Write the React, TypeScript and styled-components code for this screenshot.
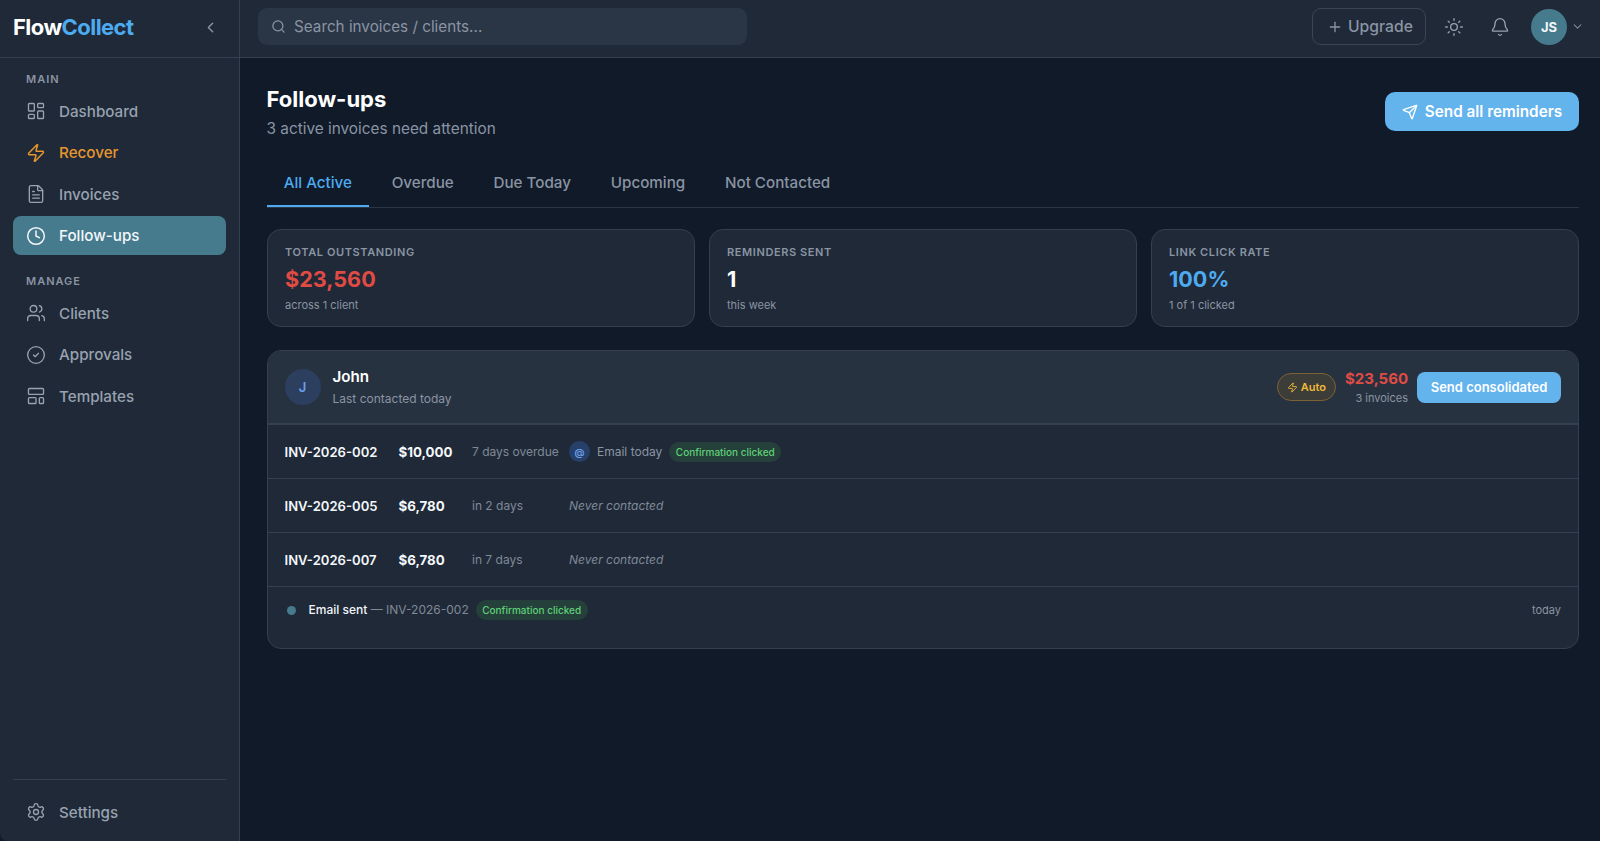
import React from "react";
import styled, { createGlobalStyle } from "styled-components";
import {
    Bell,
    ChevronDown,
    ChevronLeft,
    CircleCheck,
    Clock,
    FileText,
    LayoutDashboard,
    LayoutTemplate,
    Plus,
    Search,
    Send,
    Settings,
    Sun,
    Users,
    Zap,
} from "lucide-react";

const GlobalStyle = createGlobalStyle`
    html, body {
        margin: 0;
        padding: 0;
        height: 100%;
        background: #122a4a;
    }
    * {
        box-sizing: border-box;
    }
    body {
        font-family: Inter, "Noto Sans", sans-serif;
        color: #f1f5f9;
        overflow: hidden;
    }
`;

const Shell = styled.div`
    display: grid;
    grid-template-columns: 240px 1fr;
    height: 100vh;
    background: #101a29;
`;

const Sidebar = styled.aside`
    display: flex;
    flex-direction: column;
    background: #1f2937;
    border-right: 1px solid #343f50;
    border-bottom-left-radius: 8px;
`;

const Brand = styled.div`
    display: flex;
    align-items: center;
    justify-content: space-between;
    height: 58px;
    padding: 0 20px 3px 13px;
    border-bottom: 1px solid #343f50;
`;

const Logo = styled.div`
    font-size: 22px;
    font-weight: 700;
    letter-spacing: -0.55px;
    color: #ffffff;

    span {
        color: #4dabf0;
    }
`;

const Collapse = styled.span`
    display: flex;
    color: #8a94a3;
`;

const Nav = styled.nav`
    flex: 1;
    padding: 14px 13px 0;
`;

const SectionLabel = styled.div`
    height: 14px;
    margin-bottom: 5.5px;
    padding-left: 13px;
    font-size: 11px;
    line-height: 14px;
    font-weight: 600;
    letter-spacing: 1px;
    color: #8a94a3;
`;

const NavList = styled.div`
    display: flex;
    flex-direction: column;
    gap: 2.5px;
    margin-bottom: 19px;
`;

const NavItem = styled.div<{ $active?: boolean; $accent?: boolean }>`
    display: flex;
    align-items: center;
    gap: 13px;
    height: 39px;
    padding: 0 13px;
    border-radius: 8px;
    font-size: 15.2px;
    font-weight: 500;
    background: ${(p) => (p.$active ? "#457b8d" : "transparent")};
    color: ${(p) => (p.$active ? "#f4f7fa" : p.$accent ? "#e8962e" : "#98a2b0")};
`;

const SidebarFooter = styled.div`
    margin: 0 13px;
    padding: 13px 0 9.5px;
    border-top: 1px solid #343f50;
`;

const Main = styled.div`
    display: flex;
    flex-direction: column;
    min-width: 0;
`;

const TopBar = styled.header`
    display: flex;
    align-items: center;
    justify-content: space-between;
    height: 58px;
    padding: 5px 16px 9px 18px;
    background: #1f2937;
    border-bottom: 1px solid #343f50;
`;

const SearchBox = styled.div`
    display: flex;
    align-items: center;
    gap: 8px;
    width: 489px;
    height: 37px;
    padding: 0 13px;
    border-radius: 9px;
    background: #2a3646;
    font-size: 15.25px;
    color: #8a94a3;
`;

const TopActions = styled.div`
    display: flex;
    align-items: center;
`;

const UpgradeButton = styled.div`
    display: flex;
    align-items: center;
    gap: 5px;
    width: 114px;
    height: 37px;
    margin-right: 5px;
    padding-left: 14px;
    border: 1px solid #3a4556;
    border-radius: 9px;
    font-size: 15.7px;
    font-weight: 500;
    color: #8a94a3;
`;

const IconButton = styled.span`
    display: flex;
    justify-content: center;
    width: 46px;
    color: #98a2b0;
`;

const Avatar = styled.div`
    display: flex;
    align-items: center;
    justify-content: center;
    width: 36px;
    height: 36px;
    margin-left: 8px;
    border-radius: 50%;
    background: #457b8d;
    color: #f4f7fa;
    font-size: 13px;
    font-weight: 700;
`;

const AvatarCaret = styled.span`
    display: flex;
    margin-left: 4px;
    color: #7f8998;
`;

const Content = styled.main`
    flex: 1;
    padding: 26px 21px 0 26.5px;
`;

const PageHead = styled.div`
    display: flex;
    align-items: center;
    justify-content: space-between;
    margin-bottom: 20.5px;
`;

const PageTitle = styled.h1`
    margin: 0 0 3.5px;
    font-size: 22px;
    line-height: 30px;
    font-weight: 700;
    color: #ffffff;
`;

const PageSub = styled.p`
    margin: 0;
    font-size: 15.35px;
    line-height: 22px;
    color: #8a94a3;
`;

const PrimaryButton = styled.div<{ $small?: boolean }>`
    display: flex;
    align-items: center;
    justify-content: center;
    gap: 7px;
    width: ${(p) => (p.$small ? "144px" : "194px")};
    height: ${(p) => (p.$small ? "31px" : "39px")};
    border-radius: ${(p) => (p.$small ? "8px" : "10px")};
    background: #63b3ed;
    color: #ffffff;
    font-size: ${(p) => (p.$small ? "13px" : "15.3px")};
    font-weight: 600;
`;

const Tabs = styled.div`
    display: flex;
    gap: 5.4px;
    height: 48px;
    margin-bottom: 21px;
    border-bottom: 1px solid #2c3645;
`;

const Tab = styled.div<{ $active?: boolean }>`
    height: 47px;
    padding: 12px 17.2px 0;
    font-size: 15.2px;
    line-height: 22px;
    font-weight: 500;
    color: ${(p) => (p.$active ? "#4dabf0" : "#8a94a3")};
    border-bottom: 2px solid ${(p) => (p.$active ? "#4dabf0" : "transparent")};
`;

const Stats = styled.div`
    display: grid;
    grid-template-columns: repeat(3, 1fr);
    gap: 13.5px;
    margin-bottom: 23px;
`;

const StatCard = styled.div`
    height: 98px;
    padding: 15px 17.5px 0;
    border: 1px solid #343f50;
    border-radius: 14px;
    background: #1f2937;
`;

const StatLabel = styled.div`
    font-size: 11px;
    line-height: 15px;
    font-weight: 600;
    letter-spacing: 0.6px;
    color: #8a94a3;
`;

const StatValue = styled.div<{ $tone?: "red" | "blue" }>`
    margin-top: 4px;
    font-size: 21.6px;
    line-height: 30px;
    font-weight: 700;
    color: ${(p) => (p.$tone === "red" ? "#e04b44" : p.$tone === "blue" ? "#4dabf0" : "#ffffff")};
`;

const StatSub = styled.div`
    margin-top: 3px;
    font-size: 11px;
    line-height: 16px;
    color: #8a94a3;
`;

const ClientPanel = styled.section`
    overflow: hidden;
    border: 1px solid #343f50;
    border-radius: 14px;
    background: #1f2937;
`;

const ClientHeader = styled.div`
    display: flex;
    align-items: center;
    height: 74px;
    padding: 0 17px;
    background: #273240;
    border-bottom: 2px solid #343f50;
`;

const ClientAvatar = styled.div`
    display: flex;
    align-items: center;
    justify-content: center;
    width: 36px;
    height: 36px;
    margin-right: 12px;
    border-radius: 50%;
    background: #2d3f5e;
    color: #6ea0f0;
    font-size: 13px;
    font-weight: 600;
`;

const ClientInfo = styled.div`
    flex: 1;
`;

const ClientName = styled.div`
    font-size: 15.2px;
    line-height: 20px;
    font-weight: 600;
    color: #ffffff;
`;

const ClientMeta = styled.div`
    margin-top: 4px;
    font-size: 12px;
    line-height: 16px;
    color: #8a94a3;
`;

const AutoPill = styled.div`
    display: flex;
    align-items: center;
    gap: 3px;
    height: 28px;
    padding: 0 9px;
    border: 1px solid #7d6236;
    border-radius: 14px;
    background: #3c3c38;
    color: #f0b93a;
    font-size: 11px;
    font-weight: 600;
`;

const ClientTotals = styled.div`
    margin: 0 9px;
    text-align: right;
`;

const ClientAmount = styled.div`
    font-size: 15px;
    line-height: 20px;
    font-weight: 700;
    color: #e04b44;
`;

const ClientCount = styled.div`
    margin-top: 1px;
    font-size: 11px;
    line-height: 16px;
    color: #8a94a3;
`;

const InvoiceRow = styled.div`
    display: flex;
    align-items: center;
    height: 54px;
    padding: 0 17px;
    border-bottom: 1px solid #343f50;
    font-size: 12px;
`;

const InvoiceId = styled.div`
    width: 114px;
    font-size: 13.1px;
    font-weight: 600;
    color: #f4f7fa;
`;

const InvoiceAmount = styled.div`
    width: 73.5px;
    font-size: 13.3px;
    font-weight: 700;
    color: #f4f7fa;
`;

const InvoiceDue = styled.div`
    width: 97px;
    white-space: nowrap;
    color: #7f8998;
`;

const AtBadge = styled.div`
    display: flex;
    align-items: center;
    justify-content: center;
    width: 21px;
    height: 21px;
    margin-right: 7px;
    border-radius: 50%;
    background: #27406a;
    color: #6ea0f0;
    font-size: 10px;
    font-weight: 600;
`;

const ContactText = styled.div`
    margin-right: 7px;
    color: #8a94a3;
`;

const NeverContacted = styled.div`
    font-style: italic;
    color: #7f8998;
`;

const ClickedPill = styled.span`
    display: inline-flex;
    align-items: center;
    height: 20px;
    padding: 0 6.5px;
    border-radius: 10px;
    background: #25403a;
    color: #5fcf78;
    font-size: 10px;
    font-weight: 500;
`;

const Timeline = styled.div`
    display: flex;
    align-items: center;
    padding: 13px 17px 28px 19px;
    font-size: 12px;
    line-height: 18px;
`;

const TimelineDot = styled.span`
    width: 9px;
    height: 9px;
    margin-right: 13px;
    border-radius: 50%;
    background: #457b8d;
`;

const TimelineText = styled.div`
    flex: 1;
    display: flex;
    align-items: center;
    gap: 7px;
    color: #7f8998;

    strong {
        font-weight: 500;
        color: #f1f5f9;
    }
`;

const TimelineWhen = styled.div`
    font-size: 11px;
    color: #8a94a3;
`;

const App = () => (
    <>
        <GlobalStyle />
        <Shell>
            <Sidebar>
                <Brand>
                    <Logo>Flow<span>Collect</span></Logo>
                    <Collapse><ChevronLeft size={17} /></Collapse>
                </Brand>
                <Nav>
                    <SectionLabel>MAIN</SectionLabel>
                    <NavList>
                        <NavItem><LayoutDashboard size={20} strokeWidth={1.6} />Dashboard</NavItem>
                        <NavItem $accent><Zap size={20} strokeWidth={1.8} />Recover</NavItem>
                        <NavItem><FileText size={20} strokeWidth={1.6} />Invoices</NavItem>
                        <NavItem $active><Clock size={20} strokeWidth={1.8} />Follow-ups</NavItem>
                    </NavList>
                    <SectionLabel>MANAGE</SectionLabel>
                    <NavList>
                        <NavItem><Users size={20} strokeWidth={1.6} />Clients</NavItem>
                        <NavItem><CircleCheck size={20} strokeWidth={1.6} />Approvals</NavItem>
                        <NavItem><LayoutTemplate size={20} strokeWidth={1.6} />Templates</NavItem>
                    </NavList>
                </Nav>
                <SidebarFooter>
                    <NavItem><Settings size={20} strokeWidth={1.6} />Settings</NavItem>
                </SidebarFooter>
            </Sidebar>
            <Main>
                <TopBar>
                    <SearchBox><Search size={15} />Search invoices / clients...</SearchBox>
                    <TopActions>
                        <UpgradeButton><Plus size={16} />Upgrade</UpgradeButton>
                        <IconButton><Sun size={20} strokeWidth={1.6} /></IconButton>
                        <IconButton><Bell size={20} strokeWidth={1.6} /></IconButton>
                        <Avatar>JS</Avatar>
                        <AvatarCaret><ChevronDown size={13} /></AvatarCaret>
                    </TopActions>
                </TopBar>
                <Content>
                    <PageHead>
                        <div>
                            <PageTitle>Follow-ups</PageTitle>
                            <PageSub>3 active invoices need attention</PageSub>
                        </div>
                        <PrimaryButton><Send size={16} />Send all reminders</PrimaryButton>
                    </PageHead>
                    <Tabs>
                        <Tab $active>All Active</Tab>
                        <Tab>Overdue</Tab>
                        <Tab>Due Today</Tab>
                        <Tab>Upcoming</Tab>
                        <Tab>Not Contacted</Tab>
                    </Tabs>
                    <Stats>
                        <StatCard>
                            <StatLabel>TOTAL OUTSTANDING</StatLabel>
                            <StatValue $tone="red">$23,560</StatValue>
                            <StatSub>across 1 client</StatSub>
                        </StatCard>
                        <StatCard>
                            <StatLabel>REMINDERS SENT</StatLabel>
                            <StatValue>1</StatValue>
                            <StatSub>this week</StatSub>
                        </StatCard>
                        <StatCard>
                            <StatLabel>LINK CLICK RATE</StatLabel>
                            <StatValue $tone="blue">100%</StatValue>
                            <StatSub>1 of 1 clicked</StatSub>
                        </StatCard>
                    </Stats>
                    <ClientPanel>
                        <ClientHeader>
                            <ClientAvatar>J</ClientAvatar>
                            <ClientInfo>
                                <ClientName>John</ClientName>
                                <ClientMeta>Last contacted today</ClientMeta>
                            </ClientInfo>
                            <AutoPill><Zap size={11} />Auto</AutoPill>
                            <ClientTotals>
                                <ClientAmount>$23,560</ClientAmount>
                                <ClientCount>3 invoices</ClientCount>
                            </ClientTotals>
                            <PrimaryButton $small>Send consolidated</PrimaryButton>
                        </ClientHeader>
                        <InvoiceRow>
                            <InvoiceId>INV-2026-002</InvoiceId>
                            <InvoiceAmount>$10,000</InvoiceAmount>
                            <InvoiceDue>7 days overdue</InvoiceDue>
                            <AtBadge>@</AtBadge>
                            <ContactText>Email today</ContactText>
                            <ClickedPill>Confirmation clicked</ClickedPill>
                        </InvoiceRow>
                        <InvoiceRow>
                            <InvoiceId>INV-2026-005</InvoiceId>
                            <InvoiceAmount>$6,780</InvoiceAmount>
                            <InvoiceDue>in 2 days</InvoiceDue>
                            <NeverContacted>Never contacted</NeverContacted>
                        </InvoiceRow>
                        <InvoiceRow>
                            <InvoiceId>INV-2026-007</InvoiceId>
                            <InvoiceAmount>$6,780</InvoiceAmount>
                            <InvoiceDue>in 7 days</InvoiceDue>
                            <NeverContacted>Never contacted</NeverContacted>
                        </InvoiceRow>
                        <Timeline>
                            <TimelineDot />
                            <TimelineText>
                                <span><strong>Email sent</strong> — INV-2026-002</span>
                                <ClickedPill>Confirmation clicked</ClickedPill>
                            </TimelineText>
                            <TimelineWhen>today</TimelineWhen>
                        </Timeline>
                    </ClientPanel>
                </Content>
            </Main>
        </Shell>
    </>
);

export default App;
